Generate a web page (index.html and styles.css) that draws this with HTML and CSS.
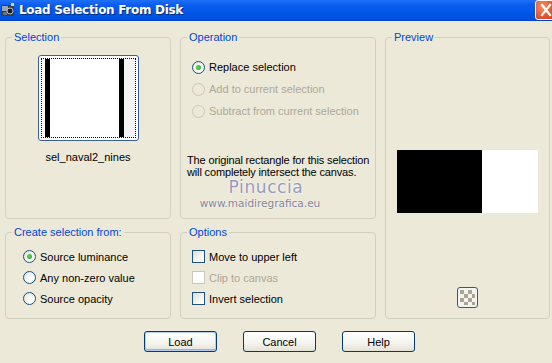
FILE: index.html
```html
<!DOCTYPE html>
<html lang="en">
	<head>
		<meta charset="UTF-8" />
		<title>Load Selection From Disk</title>
		<link rel="stylesheet" href="styles.css">
	</head>
	<body>
		<div class="dialog">
			<div class="titlebar">
				<svg class="app-icon" width="16" height="16" viewBox="0 0 16 16">
					<rect x="1" y="3" width="13" height="11" rx="1" fill="#3a3d44" />
					<rect x="2" y="4" width="6" height="5" fill="#9aa3b0" />
					<circle cx="10" cy="9" r="3" fill="#1b1d22" stroke="#b8c0cc" stroke-width="1" />
					<rect x="3" y="10" width="4" height="3" fill="#6b7280" />
					<rect x="11" y="1" width="3" height="3" fill="#d0d4da" />
				</svg>
				<span class="title">Load Selection From Disk</span>
				<span class="close">
					<svg width="18" height="18" viewBox="0 0 18 18">
						<path d="M5 4 L13 14 M13 4 L5 14" stroke="#fff" stroke-width="2.2" stroke-linecap="square" />
					</svg>
				</span>
			</div>
			<div class="content">
				<div class="groups">
					<fieldset class="group sel-group">
						<legend>Selection</legend>
						<div class="thumb">
							<div class="thumb-in">
								<span class="bar bar-left"></span>
								<span class="bar bar-right"></span>
								<span class="thumb-edge"></span>
							</div>
						</div>
						<div class="thumb-name">sel_naval2_nines</div>
					</fieldset>
					<fieldset class="group op-group">
						<legend>Operation</legend>
						<div class="choices">
							<div class="radio checked"><span class="circle"></span>Replace selection</div>
							<div class="radio disabled"><span class="circle"></span>Add to current selection</div>
							<div class="radio disabled"><span class="circle"></span>Subtract from current selection</div>
						</div>
						<p class="note">The original rectangle for this selection<br>will completely intersect the canvas.</p>
					</fieldset>
					<fieldset class="group preview-group">
						<legend>Preview</legend>
						<div class="preview-img">
							<span class="preview-black"></span>
							<span class="preview-white"></span>
						</div>
						<span class="checker-btn">
							<svg width="15" height="15" viewBox="0 0 15 15">
								<rect x="0" y="0" width="15" height="15" fill="#f4f3ee" />
								<g fill="#a8a597">
									<rect x="0" y="0" width="4" height="4" />
									<rect x="8" y="0" width="4" height="4" />
									<rect x="4" y="4" width="4" height="4" />
									<rect x="12" y="4" width="3" height="4" />
									<rect x="0" y="8" width="4" height="4" />
									<rect x="8" y="8" width="4" height="4" />
									<rect x="4" y="12" width="4" height="3" />
									<rect x="12" y="12" width="3" height="3" />
								</g>
							</svg>
						</span>
					</fieldset>
					<fieldset class="group create-group">
						<legend>Create selection from:</legend>
						<div class="choices tight">
							<div class="radio checked"><span class="circle"></span>Source luminance</div>
							<div class="radio"><span class="circle"></span>Any non-zero value</div>
							<div class="radio"><span class="circle"></span>Source opacity</div>
						</div>
					</fieldset>
					<fieldset class="group options-group">
						<legend>Options</legend>
						<div class="choices tight">
							<div class="check"><span class="box"></span>Move to upper left</div>
							<div class="check disabled"><span class="box"></span>Clip to canvas</div>
							<div class="check"><span class="box"></span>Invert selection</div>
						</div>
					</fieldset>
				</div>
				<div class="buttons">
					<span class="btn default">Load</span>
					<span class="btn">Cancel</span>
					<span class="btn">Help</span>
				</div>
			</div>
			<div class="watermark">
				<div class="wm-name">Pinuccia</div>
				<div class="wm-url">www.maidiregrafica.eu</div>
			</div>
		</div>
	</body>
</html>
```

FILE: styles.css
```css
*,
*::before,
*::after {
	box-sizing: border-box;
}
body {
	margin: 0;
	background-color: #ece9d8;
	font-family: 'Liberation Sans', Arial, sans-serif;
	font-size: 11px;
	color: #000000;
	overflow: hidden;
}
.dialog {
	position: relative;
	width: 552px;
	height: 363px;
	background-color: #ece9d8;
}
.titlebar {
	display: flex;
	align-items: center;
	height: 21px;
	background: linear-gradient(#1f6ff7 0, #0a5df0 5px, #0057e9 60%, #004fdc 100%);
	border-bottom: 1px solid #0044c4;
}
.app-icon {
	flex: none;
	margin-left: 0;
	margin-right: 3px;
}
.title {
	flex-grow: 1;
	color: #ffffff;
	font-family: 'DejaVu Sans', sans-serif;
	font-weight: bold;
	font-size: 12px;
	letter-spacing: -0.3px;
	text-shadow: 1px 1px 0 #0a2a7a;
}
.close {
	display: flex;
	align-items: center;
	justify-content: center;
	width: 21px;
	height: 20px;
	margin-right: -4px;
	border: 1px solid #ffffff;
	border-radius: 3px;
	background: radial-gradient(circle at 35% 30%, #f3916a, #e4572d 55%, #c8421f);
}
.content {
	padding: 10px 0 0 5px;
}
.groups {
	display: grid;
	grid-template-columns: 166px 196px 165px;
	grid-template-rows: 188px 93px;
	column-gap: 9px;
	row-gap: 7px;
}
.group {
	margin: 0;
	padding: 0;
	min-width: 0;
	border: 1px solid #d0d0bf;
	border-radius: 4px;
}
.group legend {
	margin-left: 6px;
	padding: 0 2px;
	color: #0046d5;
	font-size: 11px;
	line-height: 13px;
}
.preview-group {
	grid-column: 3;
	grid-row: 1 / span 2;
	display: flex;
	flex-direction: column;
	align-items: center;
}
.thumb {
	width: 101px;
	height: 86px;
	margin: 11px auto 0;
	padding: 2px;
	border: 1px solid #3a5f97;
	border-radius: 3px;
	background-color: #ffffff;
}
.thumb-in {
	position: relative;
	height: 100%;
	border: 1px dotted #000000;
	background-color: #ffffff;
}
.bar {
	position: absolute;
	top: 0;
	bottom: 0;
	width: 5px;
	background-color: #000000;
}
.bar-left {
	left: 3px;
}
.bar-right {
	left: 77px;
}
.thumb-edge {
	position: absolute;
	top: 0;
	bottom: 0;
	left: 82px;
	right: 0;
	background-color: #f3f3f3;
}
.thumb-name {
	margin-top: 10px;
	text-align: center;
	line-height: 13px;
}
.choices {
	padding: 12px 0 0 11px;
}
.choices.tight {
	padding-top: 7px;
}
.create-group .choices {
	padding-left: 17px;
}
.radio,
.check {
	display: flex;
	align-items: center;
	height: 22px;
}
.tight .radio,
.tight .check {
	height: 21px;
}
.circle {
	flex: none;
	width: 13px;
	height: 13px;
	margin-right: 4px;
	border: 1px solid #1c5180;
	border-radius: 50%;
	background: radial-gradient(circle at 65% 65%, #ffffff 20%, #dcdbd3 100%);
	display: flex;
	align-items: center;
	justify-content: center;
}
.radio.checked .circle::after {
	content: '';
	width: 5px;
	height: 5px;
	border-radius: 50%;
	background: radial-gradient(circle at 40% 40%, #5cd65c, #21a121);
}
.radio.disabled {
	color: #aca899;
}
.radio.disabled .circle {
	border-color: #cac8bb;
	background: #ece9d8;
}
.box {
	flex: none;
	width: 13px;
	height: 13px;
	margin-right: 4px;
	border: 1px solid #1c5180;
	background: linear-gradient(135deg, #dcdbd3 0%, #f6f5f0 60%, #ffffff 100%);
}
.check.disabled {
	color: #aca899;
}
.check.disabled .box {
	border-color: #cac8bb;
	background: #ffffff;
}
.note {
	margin: 32px -8px 0 6px;
	line-height: 12px;
	white-space: nowrap;
	letter-spacing: -0.15px;
}
.preview-img {
	display: flex;
	margin-top: 106px;
	width: 141px;
	height: 63px;
}
.preview-black {
	width: 85px;
	background-color: #000000;
}
.preview-white {
	flex-grow: 1;
	background-color: #ffffff;
}
.checker-btn {
	display: flex;
	align-items: center;
	justify-content: center;
	width: 21px;
	height: 21px;
	margin-top: 74px;
	border: 1px solid #2e5b8f;
	border-radius: 3px;
	background-color: #f4f3ee;
}
.buttons {
	display: flex;
	justify-content: center;
	gap: 26px;
	margin-top: 12px;
	padding-left: 2px;
}
.btn {
	display: flex;
	align-items: center;
	justify-content: center;
	width: 73px;
	height: 21px;
	border: 1px solid #003c74;
	border-radius: 3px;
	background: linear-gradient(#ffffff, #f4f3ee 60%, #e3e1d6);
	font-size: 11px;
}
.btn.default {
	box-shadow: inset 0 0 0 1px #b5cdf6, inset 0 -1px 0 1px #8cb4f2;
}
.watermark {
	position: absolute;
	left: 196px;
	top: 177px;
	width: 128px;
	text-align: center;
	pointer-events: none;
}
.wm-name {
	padding-left: 12px;
	font-family: 'DejaVu Sans', sans-serif;
	font-size: 17px;
	line-height: 20px;
	letter-spacing: 0.6px;
	color: #9898bc;
	text-shadow: 0 0 2px #ffffff, 0 0 1px #ffffff;
}
.wm-url {
	margin-top: 0;
	font-family: 'DejaVu Sans', sans-serif;
	font-size: 10.5px;
	line-height: 12px;
	color: #858598;
	text-shadow: 0 0 2px #ffffff;
}
```
